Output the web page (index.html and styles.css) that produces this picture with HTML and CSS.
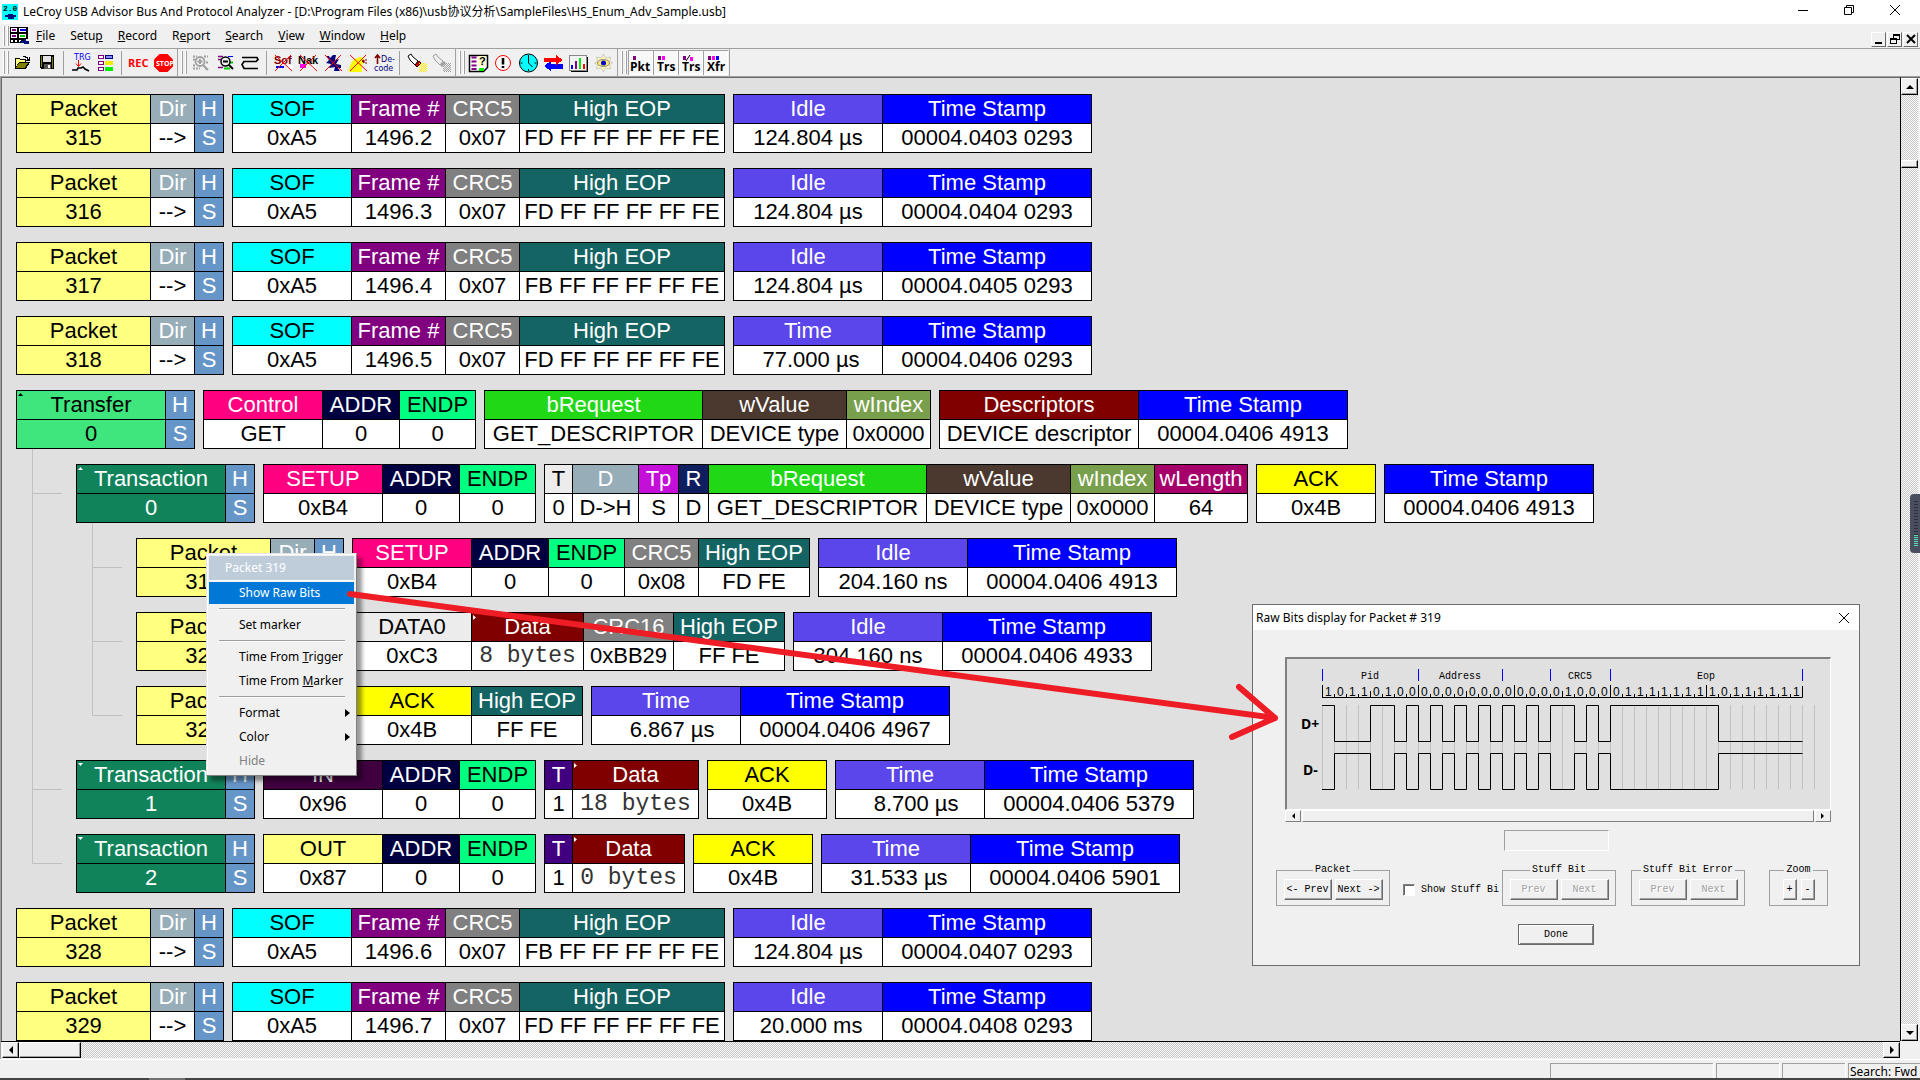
FILE: index.html
```html
<!DOCTYPE html>
<html lang="en">
<head>
<meta charset="utf-8">
<title>LeCroy USB Advisor Bus And Protocol Analyzer</title>
<link rel="stylesheet" href="styles.css">
</head>
<body>
<header class="titlebar">
  <svg class="app-icon" viewBox="0 0 16 16" shape-rendering="crispEdges"><rect width="16" height="16" fill="#0ff"/><text x="1" y="7" class="i-mono" font-size="8" fill="#000">2.0</text><path d="M3 11h3v-1h5v1h3v2h-2v2H6v-2H3z" fill="#00107c"/></svg>
  <h1>LeCroy USB Advisor Bus And Protocol Analyzer - [D:\Program Files (x86)\usb协议分析\SampleFiles\HS_Enum_Adv_Sample.usb]</h1>
  <div class="win-buttons">
    <button aria-label="Minimize"><svg viewBox="0 0 12 12"><path d="M1 6.500h10" stroke="#000" fill="none"/></svg></button>
    <button aria-label="Restore"><svg viewBox="0 0 12 12"><path d="M1.500 3.500h7v7h-7zM3.500 3V1.500h7v7H9" stroke="#000" fill="none"/></svg></button>
    <button aria-label="Close"><svg viewBox="0 0 12 12"><path d="M1 1l10 10M11 1L1 11" stroke="#000" fill="none"/></svg></button>
  </div>
</header>

<nav class="menubar">
  <span class="grip"></span>
  <svg class="doc-icon" viewBox="0 0 19 18" shape-rendering="crispEdges"><path d="M0 0h18v12h-4v4H0z" fill="#000"/><path d="M1 1h6v4H1zM9 1h7v4H9zM1 7h6v4H1zM9 7h7v4H9zM1 13h10v2H1z" fill="#fff"/><path d="M2 2h4v2H2zM2 8h4v2H2z" fill="#800080"/><path d="M10 2h6v2h-6z" fill="#00f"/><path d="M10 8h5v2h-5z" fill="#0c0"/><path d="M3 13h2v2H3zM7 13h2v2H7z" fill="#000"/><path d="M10 14h4v-2h2v2h3v3h-5v-1h-4z" fill="#00107c"/></svg>
  <button><u>F</u>ile</button><button>Setu<u>p</u></button><button><u>R</u>ecord</button><button>R<u>e</u>port</button><button><u>S</u>earch</button><button><u>V</u>iew</button><button><u>W</u>indow</button><button><u>H</u>elp</button>
  <div class="mdi-buttons">
    <button aria-label="Minimize document"><svg viewBox="0 0 12 12"><path d="M2 9h7v2H2z"/></svg></button>
    <button aria-label="Restore document"><svg viewBox="0 0 12 12" shape-rendering="crispEdges"><path d="M4 1h7v6H8v4H1V5h3zM5 3v2h3v1h2V3zM2 7v3h5V7z" fill-rule="evenodd"/></svg></button>
    <button aria-label="Close document"><svg viewBox="0 0 12 12"><path d="M2 2l8 8M10 2l-8 8" stroke="#000" stroke-width="2"/></svg></button>
  </div>
</nav>

<div class="toolbar" role="toolbar" aria-label="Tools">
  <div class="tool-group">
    <span class="grip"></span>
    <button aria-label="Open"><svg viewBox="0 0 25 25" shape-rendering="crispEdges"><path d="M5 8h4l1 1h6v3h4l-4 7H5z" fill="#000"/><path d="M6 9h3l1 1h5v2H9l-3 5z" fill="#ffff80"/><path d="M9 13h9l-3 5H6z" fill="#808000"/><path d="M13 6h3v1h2v2h1v-2h1v4h-4v-1h1V8h-2V7h-2z" fill="#000"/></svg></button>
    <button aria-label="Save"><svg viewBox="0 0 25 25" shape-rendering="crispEdges"><path d="M5 5h14v14H6l-1-1z" fill="#000"/><path d="M6 6h1v11H6zM17 7h1v11h-1z" fill="#808000"/><path d="M8 6h8v6H8z" fill="#e4e4e4"/><path d="M9 14h7v5H9z" fill="#555"/><path d="M13 15h2v3h-2z" fill="#fff"/></svg></button>
    <span class="sep"></span>
    <button aria-label="Trigger"><svg viewBox="0 0 25 25"><text x="6" y="10" class="i-sans" font-size="8" fill="#00f">TRG</text><path d="M10.500 10v6M8 13.500l2.500 3 2.500-3" stroke="#f00" fill="none"/><path d="M4 20h5l1-2h3l2-1 2 2 4 2" stroke="#000" stroke-width="1.600" fill="none"/></svg></button>
    <button aria-label="Layout"><svg viewBox="0 0 25 25" shape-rendering="crispEdges"><path d="M5.500 5.500h5v3h-5zM5.500 11.500h5v3h-5zM5.500 17.500h5v3h-5z" fill="#fff" stroke="#800080"/><path d="M12.500 5.500h7v3h-7z" fill="#88f" stroke="#000080"/><path d="M12 11h8v4h-8z" fill="#ee0"/><path d="M12 17h8v4h-8z" fill="#0e0"/></svg></button>
    <span class="sep"></span>
    <button aria-label="Record"><svg viewBox="0 0 25 25"><text x="2" y="17" class="i-cond" font-size="11" fill="#f00">REC</text></svg></button>
    <button aria-label="Stop"><svg viewBox="0 0 25 25"><path d="M8.500 4h8l5.500 5.500v7L16.500 22h-8L3 16.500v-7z" fill="#f00"/><text x="5" y="16" class="i-cond" font-size="7" fill="#fff">STOP</text></svg></button>
  </div>
  <div class="tool-group">
    <span class="grip"></span>
    <button aria-label="Zoom in" disabled><svg viewBox="0 0 25 25" fill="none" stroke="#a0a0a0"><path d="M5 6.500h4M16 6.500h4M5 9.500h3M5 15.500h3M5 18.500h7M17 18.500h3M18 12.500h3" stroke-dasharray="2 1" stroke-width="2"/><circle cx="12" cy="11.500" r="4.500" stroke-width="1.800"/><path d="M12 9v5M9.500 11.500h5M15 15l5 5" stroke-width="2"/></svg></button>
    <button aria-label="Zoom out"><svg viewBox="0 0 25 25" fill="none" stroke="#000"><path d="M5 6.500h5M5 9.500h3M5 17.500h5" stroke="#800080" stroke-width="1.600"/><path d="M15 6.500h5" stroke="#00f"/><path d="M11 18.500h6M17 12.500h3" stroke="#0c0" stroke-width="2"/><circle cx="12.500" cy="11.500" r="4.500" stroke-width="1.500" fill="#eee"/><path d="M10 11.500h5M16 15l4 4" stroke-width="1.800"/></svg></button>
    <button aria-label="Wrap"><svg viewBox="0 0 25 25"><path d="M4 7.500h15l1 2-2 2H6l-2 3 2 4h14" fill="none" stroke="#000" stroke-width="1.700"/></svg></button>
    <span class="sep"></span>
    <button aria-label="Hide SOF"><svg viewBox="0 0 25 25"><path d="M5 16h8v2H5z" fill="#00f"/><path d="M16 15h6v4h-6z" fill="#fff"/><text x="3" y="14" class="i-bold" font-size="11" fill="#800000">Sof</text><path d="M4 5l17 16M20 5L4 21" stroke="#f00"/></svg></button>
    <button aria-label="Hide NAK"><svg viewBox="0 0 25 25"><path d="M4 14h6v4H4z" fill="#f0f"/><path d="M14 15h6v4h-6z" fill="#fff"/><text x="2" y="14" class="i-bold" font-size="11" fill="#000">Nak</text><path d="M4 5l17 16M20 5L4 21" stroke="#f00"/></svg></button>
    <button aria-label="Hide devices"><svg viewBox="0 0 25 25"><path d="M5 6h3l1 2 3-3h3l-1 5 4-1-3 5 5 1v3h-3l2 3h-6l1-4-6 1 2-4-5-1 3-3z" fill="#000080"/><path d="M4 5l17 16M20 5L4 21" stroke="#f00"/></svg></button>
    <button aria-label="Hide chirps"><svg viewBox="0 0 25 25"><path d="M3 22c0-8 5-14 9-14 2-2 6-1 6 3-1 3-3 4-2 11z" fill="#ff0"/><path d="M16 11l2-1v3zM19 10h2M19 13h2" stroke="#800000" fill="#800000"/><path d="M4 5l17 16M20 5L4 21" stroke="#f00"/></svg></button>
    <button aria-label="Decode"><svg viewBox="0 0 25 25"><path d="M6.500 5v9M4 8l2.500-3L9 8" stroke="#800000" stroke-width="1.600" fill="none"/><text x="10" y="12" class="i-sans" font-size="8" fill="#000080">De-</text><text x="3" y="21" class="i-sans" font-size="8" fill="#000080">code</text></svg></button>
    <span class="sep"></span>
    <button aria-label="Find"><svg viewBox="0 0 25 25"><path d="M4 6l3-2 2 3 5 4-3 4-5-5z" fill="#fff" stroke="#000"/><path d="M11 15l4-4 2 2-4 4z" fill="#c00" stroke="#400"/><path d="M15 13h8v9h-8z" fill="url(#ydots)"/><defs><pattern id="ydots" width="2" height="2" patternUnits="userSpaceOnUse"><path d="M0 0h1v1H0zM1 1h1v1H1z" fill="#fe0"/></pattern></defs></svg></button>
    <button aria-label="Find next" disabled><svg viewBox="0 0 25 25"><path d="M4 6l3-2 2 3 5 4-3 4-5-5z" fill="#eee" stroke="#a0a0a0"/><path d="M11 15l4-4 2 2-4 4z" fill="#a0a0a0"/><path d="M14 13h8v9h-8z" fill="url(#gdots)"/><defs><pattern id="gdots" width="2" height="2" patternUnits="userSpaceOnUse"><path d="M0 0h1v1H0zM1 1h1v1H1z" fill="#a0a0a0"/></pattern></defs></svg></button>
  </div>
  <div class="tool-group">
    <span class="grip"></span>
    <button aria-label="File information"><svg viewBox="0 0 25 25"><path d="M3.500 5.500h18v12l-4 4h-14z" fill="#fff" stroke="#000" stroke-width="1.500"/><path d="M5.500 7.500h5M5.500 11.500h5M5.500 15.500h5M5.500 19h5" stroke="#800080" stroke-width="2"/><path d="M13 18h5v3h-5z" fill="#0e0"/><path d="M12 6h8v10h-8z" fill="#ffc"/><text x="13" y="15" class="i-bold" font-size="11">?</text></svg></button>
    <button aria-label="Error summary"><svg viewBox="0 0 25 25"><circle cx="12" cy="13" r="7.500" fill="#fff" stroke="#f00"/><path d="M12 8v6.500M12 16v2" stroke="#000" stroke-width="2.600"/></svg></button>
    <button aria-label="Timing"><svg viewBox="0 0 25 25"><circle cx="12.500" cy="13" r="9" fill="#0ff" stroke="#000"/><path d="M12.500 5v8l4 4M12.500 19v2M4.500 13h2M18.500 13h2" stroke="#000" fill="none"/></svg></button>
    <button aria-label="Traffic"><svg viewBox="0 0 25 25" shape-rendering="crispEdges"><path d="M22 14H10v-3l-7 5 7 5v-2h12z" fill="#00f"/><path d="M3 8h12V5l7 5-7 5v-3H3z" fill="#f00"/></svg></button>
    <button aria-label="Chart"><svg viewBox="0 0 25 25" shape-rendering="crispEdges"><path d="M5 7h17v15H5z" fill="#000"/><path d="M3 5h17v15H3z" fill="#f4f4f4" stroke="#888"/><path d="M5 15h2v4H5z" fill="#00f"/><path d="M9 11h2v8H9z" fill="#808"/><path d="M13 8h2v11h-2z" fill="#0e0"/><path d="M17 14h2v5h-2z" fill="#f00"/></svg></button>
    <button aria-label="View options"><svg viewBox="0 0 25 25"><path d="M12.500 4l2 4 5-1-1 4 3 2-3 2 1 4-5-1-2 4-2-4-5 1 1-4-3-2 3-2-1-4 5 1z" fill="#fff6b8" stroke="#bbb" stroke-width=".7"/><ellipse cx="12.500" cy="13" rx="6" ry="3.500" fill="#ffe96b" stroke="#888"/><circle cx="12.500" cy="13" r="2.500" fill="#00c"/></svg></button>
  </div>
  <div class="tool-group">
    <span class="grip"></span>
    <button class="pressed" aria-label="Packet view"><svg viewBox="0 0 25 25"><path d="M5 6h3v4H5z" fill="#800080"/><text x="2" y="21" class="i-cond" font-size="12">Pkt</text></svg></button>
    <button class="pressed" aria-label="Transaction view"><svg viewBox="0 0 25 25"><path d="M5 6h3v4H5z" fill="#800080"/><path d="M9 6h3v4H9z" fill="#f0f"/><text x="4" y="21" class="i-cond" font-size="12">Trs</text></svg></button>
    <button class="pressed" aria-label="Split transaction view"><svg viewBox="0 0 25 25"><path d="M5 6h3v4H5z" fill="#800080"/><path d="M12 7h3v4h-3z" fill="#f0f"/><path d="M8 11l4-6" stroke="#000"/><text x="4" y="21" class="i-cond" font-size="12">Trs</text></svg></button>
    <button class="pressed" aria-label="Transfer view"><svg viewBox="0 0 25 25"><path d="M5 6h3v4H5z" fill="#800080"/><path d="M9 6h3v4H9z" fill="#f0f"/><path d="M13 6h3v4h-3z" fill="#00f"/><text x="4" y="21" class="i-cond" font-size="12">Xfr</text></svg></button>
  </div>
</div>

<div class="workspace">
  <main class="trace">
    <section class="row">
      <table><tr><th class="packet">Packet</th><th class="dir">Dir</th><th class="hs">H</th></tr><tr><td class="packet">315</td><td>--&gt;</td><td class="hs">S</td></tr></table>
      <table><tr><th class="pid sof">SOF</th><th class="frame">Frame #</th><th class="crc5">CRC5</th><th class="eop long">High EOP</th></tr><tr><td>0xA5</td><td>1496.2</td><td>0x07</td><td>FD FF FF FF FF FE</td></tr></table>
      <table><tr><th class="time">Idle</th><th class="stamp">Time Stamp</th></tr><tr><td>124.804 µs</td><td>00004.0403 0293</td></tr></table>
    </section>
    <section class="row">
      <table><tr><th class="packet">Packet</th><th class="dir">Dir</th><th class="hs">H</th></tr><tr><td class="packet">316</td><td>--&gt;</td><td class="hs">S</td></tr></table>
      <table><tr><th class="pid sof">SOF</th><th class="frame">Frame #</th><th class="crc5">CRC5</th><th class="eop long">High EOP</th></tr><tr><td>0xA5</td><td>1496.3</td><td>0x07</td><td>FD FF FF FF FF FE</td></tr></table>
      <table><tr><th class="time">Idle</th><th class="stamp">Time Stamp</th></tr><tr><td>124.804 µs</td><td>00004.0404 0293</td></tr></table>
    </section>
    <section class="row">
      <table><tr><th class="packet">Packet</th><th class="dir">Dir</th><th class="hs">H</th></tr><tr><td class="packet">317</td><td>--&gt;</td><td class="hs">S</td></tr></table>
      <table><tr><th class="pid sof">SOF</th><th class="frame">Frame #</th><th class="crc5">CRC5</th><th class="eop long">High EOP</th></tr><tr><td>0xA5</td><td>1496.4</td><td>0x07</td><td>FB FF FF FF FF FE</td></tr></table>
      <table><tr><th class="time">Idle</th><th class="stamp">Time Stamp</th></tr><tr><td>124.804 µs</td><td>00004.0405 0293</td></tr></table>
    </section>
    <section class="row">
      <table><tr><th class="packet">Packet</th><th class="dir">Dir</th><th class="hs">H</th></tr><tr><td class="packet">318</td><td>--&gt;</td><td class="hs">S</td></tr></table>
      <table><tr><th class="pid sof">SOF</th><th class="frame">Frame #</th><th class="crc5">CRC5</th><th class="eop long">High EOP</th></tr><tr><td>0xA5</td><td>1496.5</td><td>0x07</td><td>FD FF FF FF FF FE</td></tr></table>
      <table><tr><th class="time">Time</th><th class="stamp">Time Stamp</th></tr><tr><td>&nbsp;77.000 µs</td><td>00004.0406 0293</td></tr></table>
    </section>

    <section class="transfer-block">
      <div class="row">
        <table><tr><th class="transfer mark-up">Transfer</th><th class="hs">H</th></tr><tr><td class="transfer">0</td><td class="hs">S</td></tr></table>
        <table><tr><th class="pid setup">Control</th><th class="addr">ADDR</th><th class="endp">ENDP</th></tr><tr><td>GET</td><td>0</td><td>0</td></tr></table>
        <table><tr><th class="request">bRequest</th><th class="value">wValue</th><th class="index">wIndex</th></tr><tr><td>GET_DESCRIPTOR</td><td>DEVICE type</td><td>0x0000</td></tr></table>
        <table><tr><th class="descriptors">Descriptors</th><th class="stamp">Time Stamp</th></tr><tr><td>DEVICE descriptor</td><td>00004.0406 4913</td></tr></table>
      </div>
      <div class="children">
        <div class="node">
          <div class="row">
            <table><tr><th class="transaction mark-up">Transaction</th><th class="hs">H</th></tr><tr><td class="transaction">0</td><td class="hs">S</td></tr></table>
            <table><tr><th class="pid setup">SETUP</th><th class="addr">ADDR</th><th class="endp">ENDP</th></tr><tr><td>0xB4</td><td>0</td><td>0</td></tr></table>
            <table><tr><th class="toggle pale">T</th><th class="direction">D</th><th class="type">Tp</th><th class="recipient">R</th><th class="request">bRequest</th><th class="value">wValue</th><th class="index">wIndex</th><th class="length">wLength</th></tr><tr><td>0</td><td>D-&gt;H</td><td>S</td><td>D</td><td>GET_DESCRIPTOR</td><td>DEVICE type</td><td>0x0000</td><td>64</td></tr></table>
            <table><tr><th class="pid ack">ACK</th></tr><tr><td>0x4B</td></tr></table>
            <table><tr><th class="stamp">Time Stamp</th></tr><tr><td>00004.0406 4913</td></tr></table>
          </div>
          <div class="children">
            <div class="node">
              <div class="row">
                <table><tr><th class="packet">Packet</th><th class="dir">Dir</th><th class="hs">H</th></tr><tr><td class="packet">319</td><td>--&gt;</td><td class="hs">S</td></tr></table>
                <table><tr><th class="pid setup">SETUP</th><th class="addr">ADDR</th><th class="endp">ENDP</th><th class="crc5">CRC5</th><th class="eop">High EOP</th></tr><tr><td>0xB4</td><td>0</td><td>0</td><td>0x08</td><td>FD FE</td></tr></table>
                <table><tr><th class="time">Idle</th><th class="stamp">Time Stamp</th></tr><tr><td>204.160 ns</td><td>00004.0406 4913</td></tr></table>
              </div>
            </div>
            <div class="node">
              <div class="row">
                <table><tr><th class="packet">Packet</th><th class="dir">Dir</th><th class="hs">H</th></tr><tr><td class="packet">320</td><td>--&gt;</td><td class="hs">S</td></tr></table>
                <table><tr><th class="pid pale">DATA0</th><th class="data mark-right">Data</th><th class="crc16">CRC16</th><th class="eop">High EOP</th></tr><tr><td>0xC3</td><td class="bytes">8 bytes</td><td>0xBB29</td><td>FF FE</td></tr></table>
                <table><tr><th class="time">Idle</th><th class="stamp">Time Stamp</th></tr><tr><td>304.160 ns</td><td>00004.0406 4933</td></tr></table>
              </div>
            </div>
            <div class="node last">
              <div class="row">
                <table><tr><th class="packet">Packet</th><th class="dir">Dir</th><th class="hs">H</th></tr><tr><td class="packet">321</td><td>--&gt;</td><td class="hs">S</td></tr></table>
                <table><tr><th class="pid ack">ACK</th><th class="eop">High EOP</th></tr><tr><td>0x4B</td><td>FF FE</td></tr></table>
                <table><tr><th class="time">Time</th><th class="stamp">Time Stamp</th></tr><tr><td>&nbsp;&nbsp;6.867 µs</td><td>00004.0406 4967</td></tr></table>
              </div>
            </div>
          </div>
        </div>
        <div class="node">
          <div class="row">
            <table><tr><th class="transaction mark-down">Transaction</th><th class="hs">H</th></tr><tr><td class="transaction">1</td><td class="hs">S</td></tr></table>
            <table><tr><th class="pid in">IN</th><th class="addr">ADDR</th><th class="endp">ENDP</th></tr><tr><td>0x96</td><td>0</td><td>0</td></tr></table>
            <table><tr><th class="toggle">T</th><th class="data wide mark-right">Data</th></tr><tr><td>1</td><td class="bytes">18 bytes</td></tr></table>
            <table><tr><th class="pid ack">ACK</th></tr><tr><td>0x4B</td></tr></table>
            <table><tr><th class="time">Time</th><th class="stamp">Time Stamp</th></tr><tr><td>&nbsp;&nbsp;8.700 µs</td><td>00004.0406 5379</td></tr></table>
          </div>
        </div>
        <div class="node last">
          <div class="row">
            <table><tr><th class="transaction mark-down">Transaction</th><th class="hs">H</th></tr><tr><td class="transaction">2</td><td class="hs">S</td></tr></table>
            <table><tr><th class="pid out">OUT</th><th class="addr">ADDR</th><th class="endp">ENDP</th></tr><tr><td>0x87</td><td>0</td><td>0</td></tr></table>
            <table><tr><th class="toggle">T</th><th class="data mark-right">Data</th></tr><tr><td>1</td><td class="bytes">0 bytes</td></tr></table>
            <table><tr><th class="pid ack">ACK</th></tr><tr><td>0x4B</td></tr></table>
            <table><tr><th class="time">Time</th><th class="stamp">Time Stamp</th></tr><tr><td>&nbsp;31.533 µs</td><td>00004.0406 5901</td></tr></table>
          </div>
        </div>
      </div>
    </section>

    <section class="row">
      <table><tr><th class="packet">Packet</th><th class="dir">Dir</th><th class="hs">H</th></tr><tr><td class="packet">328</td><td>--&gt;</td><td class="hs">S</td></tr></table>
      <table><tr><th class="pid sof">SOF</th><th class="frame">Frame #</th><th class="crc5">CRC5</th><th class="eop long">High EOP</th></tr><tr><td>0xA5</td><td>1496.6</td><td>0x07</td><td>FB FF FF FF FF FE</td></tr></table>
      <table><tr><th class="time">Idle</th><th class="stamp">Time Stamp</th></tr><tr><td>124.804 µs</td><td>00004.0407 0293</td></tr></table>
    </section>
    <section class="row">
      <table><tr><th class="packet">Packet</th><th class="dir">Dir</th><th class="hs">H</th></tr><tr><td class="packet">329</td><td>--&gt;</td><td class="hs">S</td></tr></table>
      <table><tr><th class="pid sof">SOF</th><th class="frame">Frame #</th><th class="crc5">CRC5</th><th class="eop long">High EOP</th></tr><tr><td>0xA5</td><td>1496.7</td><td>0x07</td><td>FD FF FF FF FF FE</td></tr></table>
      <table><tr><th class="time">Idle</th><th class="stamp">Time Stamp</th></tr><tr><td>&nbsp;20.000 ms</td><td>00004.0408 0293</td></tr></table>
    </section>
  </main>
  <div class="vscroll">
    <button aria-label="Scroll up"><svg viewBox="0 0 8 8"><path d="M0 6l4-4 4 4z"/></svg></button>
    <span class="track before"></span><span class="thumb"></span><span class="track"></span>
    <button aria-label="Scroll down"><svg viewBox="0 0 8 8"><path d="M0 2l4 4 4-4z"/></svg></button>
  </div>
  <div class="hscroll">
    <button aria-label="Scroll left"><svg viewBox="0 0 8 8"><path d="M6 0L2 4l4 4z"/></svg></button>
    <span class="thumb"></span><span class="track"></span>
    <button aria-label="Scroll right"><svg viewBox="0 0 8 8"><path d="M2 0l4 4-4 4z"/></svg></button>
  </div>
</div>

<footer class="statusbar">
  <span class="pane wide"></span><span class="pane"></span><span class="pane"></span><span class="pane search">Search: Fwd</span>
</footer>
<div class="desktop-edge"><span></span></div>

<div class="context-menu" role="menu">
  <div class="menu-title">Packet 319</div>
  <button role="menuitem" class="selected">Show Raw Bits</button>
  <hr>
  <button role="menuitem">Set marker</button>
  <hr>
  <button role="menuitem"><span>Time From <u>T</u>rigger</span></button>
  <button role="menuitem"><span>Time From <u>M</u>arker</span></button>
  <hr>
  <button role="menuitem">Format<svg viewBox="0 0 5 8"><path d="M0 0l5 4-5 4z"/></svg></button>
  <button role="menuitem">Color<svg viewBox="0 0 5 8"><path d="M0 0l5 4-5 4z"/></svg></button>
  <button role="menuitem" disabled>Hide</button>
</div>

<div class="dialog" role="dialog" aria-label="Raw Bits">
  <div class="dialog-title"><h2>Raw Bits display for Packet # 319</h2><button aria-label="Close dialog"><svg viewBox="0 0 12 12"><path d="M1 1l10 10M11 1L1 11" stroke="#000" fill="none"/></svg></button></div>
  <div class="dialog-body">
    <svg class="wave" viewBox="0 0 543 150">
      <defs>
        <pattern id="bits" x="35" y="0" width="12" height="150" patternUnits="userSpaceOnUse"><path d="M.5 0v150" stroke="#c0c0c0"/></pattern>
        <pattern id="ticks" x="35" y="0" width="12" height="40" patternUnits="userSpaceOnUse"><path d="M.5 35v4" stroke="#000"/></pattern>
      </defs>
      <rect x="35" y="46" width="493" height="84" fill="url(#bits)"/>
      <rect x="35" y="34" width="480" height="5" fill="url(#ticks)"/>
      <path d="M35.500 10v12M131.500 10v12M215.500 10v12M263.500 10v12M323.500 10v12M515.500 10v12" stroke="#00f"/>
      <g class="labels"><text x="83" y="20">Pid</text><text x="173" y="20">Address</text><text x="293" y="20">CRC5</text><text x="419" y="20">Eop</text></g>
      <path d="M35.500 26v12.500h480V27M131.500 26v12M227.500 26v12M323.500 26v12M419.500 26v12M83.500 32v6M179.500 32v6M275.500 32v6M371.500 32v6M467.500 32v6" stroke="#000" fill="none"/>
      <g class="bits"><text x="38 50 62 74 86 98 110 122" y="37">10110100</text><text x="134 146 158 170 182 194 206 218" y="37">00000000</text><text x="230 242 254 266 278 290 302 314" y="37">00001000</text><text x="326 338 350 362 374 386 398 410" y="37">01111111</text><text x="422 434 446 458 470 482 494 506" y="37">10111111</text></g>
      <g fill="none" stroke="#000">
        <path d="M35 46.500h12.500v36h36v-36h24v36h12v-36h12v36h12v-36h12v36h12v-36h12v36h12v-36h12v36h12v-36h12v36h12v-36h12v36h12v-36h24v36h12v-36h12v36h12v-36h108v36h84"/>
        <path d="M35 130.500h12.500v-36h36v36h24v-36h12v36h12v-36h12v36h12v-36h12v36h12v-36h12v36h12v-36h12v36h12v-36h12v36h12v-36h12v36h24v-36h12v36h12v-36h12v36h108v-36h84"/>
      </g>
      <text class="line-name" x="14" y="70">D+</text><text class="line-name" x="16" y="116">D-</text>
    </svg>
    <div class="wave-scroll">
      <button aria-label="Wave left"><svg viewBox="0 0 6 6"><path d="M5 0L2 3l3 3z"/></svg></button><span></span><button aria-label="Wave right"><svg viewBox="0 0 6 6"><path d="M1 0l3 3-3 3z"/></svg></button>
    </div>
    <input class="readout" aria-label="Selected bits" readonly>
    <div class="controls">
      <fieldset><legend>Packet</legend><button>&lt;- Prev</button><button>Next -&gt;</button></fieldset>
      <label class="stuff"><input type="checkbox">Show Stuff Bi</label>
      <fieldset><legend>Stuff Bit</legend><button disabled>Prev</button><button disabled>Next</button></fieldset>
      <fieldset class="errors"><legend>Stuff Bit Error</legend><button disabled>Prev</button><button disabled>Next</button></fieldset>
      <fieldset class="zoom"><legend>Zoom</legend><button>+</button><button>-</button></fieldset>
    </div>
    <button class="done">Done</button>
  </div>
</div>

<svg class="callout" viewBox="0 0 940 160"><path d="M9 9L934 133M898 102l36 31-43 19" fill="none" stroke="#ee1c24" stroke-width="6" stroke-linecap="round" stroke-linejoin="round"/></svg>
<div class="side-meter"><span class="idle"></span><span class="live"></span></div>
</body>
</html>
```
FILE: styles.css
```css
* { box-sizing: border-box; }

body {
  margin: 0;
  min-height: 100vh;
  display: flex;
  flex-direction: column;
  position: relative;
  overflow: hidden;
  background: #f0f0f0;
  color: #000;
  font: 12px/16px "Noto Sans", "Noto Sans CJK SC", sans-serif;
}

button {
  font: inherit;
  color: inherit;
  padding: 0;
  margin: 0;
  border: 0;
  background: none;
}

svg { display: block; }

/* Title bar */
.titlebar {
  height: 24px;
  padding: 0 2px;
  display: flex;
  align-items: center;
  background: #fff;
}
.app-icon { width: 16px; height: 16px; }
.titlebar h1 {
  margin: 0 0 0 5px;
  flex: 1;
  font: inherit;
  line-height: 24px;
  white-space: nowrap;
}
.win-buttons { display: flex; align-self: flex-start; }
.win-buttons button { width: 46px; height: 20px; display: grid; place-items: center; }
.win-buttons svg { width: 12px; height: 12px; }

/* Menu bar */
.menubar {
  height: 25px;
  display: flex;
  align-items: center;
  border-bottom: 1px solid #a0a0a0;
}
.menubar > button { padding: 0 8px 0 7px; line-height: 22px; }
.grip {
  width: 10px;
  align-self: stretch;
  margin: 2px 0;
  background:
    linear-gradient(#a0a0a0, #a0a0a0) 4px 0 / 1px 100% no-repeat,
    linear-gradient(#a0a0a0, #a0a0a0) 8px 0 / 1px 100% no-repeat,
    linear-gradient(#fff, #fff) 3px 0 / 1px 100% no-repeat,
    linear-gradient(#fff, #fff) 7px 0 / 1px 100% no-repeat;
}
.doc-icon { width: 19px; height: 18px; }
.mdi-buttons { margin-left: auto; padding: 6px 2px 0 0; display: flex; gap: 1px; }
.mdi-buttons button {
  width: 15px;
  height: 15px;
  display: grid;
  place-items: center;
  border: 1px solid;
  border-color: #fff #696969 #696969 #fff;
}
.mdi-buttons svg { width: 12px; height: 12px; }

/* Tool bar */
.toolbar { height: 28px; display: flex; border-bottom: 1px solid #a0a0a0; }
.tool-group {
  display: flex;
  align-items: center;
  padding-right: 1px;
  border-right: 1px solid #a0a0a0;
}
.tool-group button, .tool-group button svg { width: 25px; height: 25px; }
.tool-group .pressed {
  background: #f8f8f8;
  box-shadow: inset 1px 1px #a0a0a0, inset -1px -1px #fff;
}
.sep { width: 8px; height: 24px; border-left: 3px solid transparent; }
.sep::before { content: ""; display: block; width: 1px; height: 24px; background: #a0a0a0; }
.i-mono { font-family: "Liberation Mono", monospace; font-weight: bold; }
.i-sans { font-family: "DejaVu Sans", sans-serif; }
.i-bold { font-family: "Liberation Sans", sans-serif; font-weight: bold; }
.i-cond { font-family: "Liberation Sans Narrow", "Open Sans", sans-serif; font-weight: bold; }

/* Document window */
.workspace {
  flex: 1;
  min-height: 0;
  display: grid;
  grid-template: minmax(0, 1fr) 18px / minmax(0, 1fr) 20px;
  border: solid #a0a0a0;
  border-width: 0 0 0 1px;
}
.trace {
  padding: 16px 0 0 14px;
  background: #e0e0e0;
  border: solid #696969;
  border-width: 1px 0 0 1px;
  font: 22px/28px "Liberation Sans", Arial, sans-serif;
  display: flex;
  flex-direction: column;
  gap: 15px;
  overflow: hidden;
}
.row { display: flex; gap: 8px; }
.row table {
  border-collapse: separate;
  border-spacing: 0;
  border: solid #000;
  border-width: 1px 0 0 1px;
  flex: none;
}
.row th, .row td {
  height: 29px;
  padding: 0;
  border: solid #000;
  border-width: 0 1px 1px 0;
  background: #fff;
  font-weight: normal;
  text-align: center;
  white-space: nowrap;
}
.row th { color: #fff; position: relative; }
.row .bytes { font: 23px/28px "Liberation Mono", monospace; color: #333; }

.row .packet { background: #ffff80; color: #000; width: 134px; }
.row .dir { background: #97adb8; width: 44px; }
.row .hs { background: #6696c8; color: #fff; width: 29px; }
.row .pid { width: 119px; }
.row .sof { background: #0ff; color: #000; }
.row .setup { background: #ff0080; }
.row .in { background: #400040; }
.row .out { background: #ffff80; color: #000; }
.row .ack { background: #ff0; color: #000; }
.row .frame { background: #800080; width: 94px; }
.row .crc5 { background: #808080; width: 74px; }
.row .crc16 { background: #808080; width: 90px; }
.row .eop { background: #156464; width: 111px; }
.row .eop.long { width: 205px; }
.row .time { background: #5a46eb; width: 149px; }
.row .stamp { background: #00f; width: 209px; }
.row .transfer { background: #3ee67d; color: #000; width: 149px; }
.row .transaction { background: #11835b; color: #fff; width: 149px; }
.row .addr { background: #000040; width: 77px; }
.row .endp { background: #00ff80; color: #000; width: 76px; }
.row .request { background: #20d816; width: 218px; }
.row .value { background: #4b382f; width: 144px; }
.row .index { background: #789f4c; width: 84px; }
.row .length { background: #a6006b; width: 93px; }
.row .descriptors { background: #800000; width: 199px; }
.row .toggle { background: #400080; width: 28px; }
.row .direction { background: #97adb8; width: 66px; }
.row .type { background: #c30fd7; width: 40px; }
.row .recipient { background: #0f1e5f; width: 30px; }
.row .data { background: #800000; width: 112px; }
.row .data.wide { width: 126px; }
.row .pale { background: #ececec; color: #000; }

.mark-up::before, .mark-down::before, .mark-right::before {
  content: "";
  position: absolute;
  left: 1px;
  top: 2px;
  width: 5px;
  height: 3px;
  background: currentColor;
}
.mark-up::before { clip-path: polygon(50% 0, 100% 100%, 0 100%); }
.mark-down::before { clip-path: polygon(0 0, 100% 0, 50% 100%); }
.mark-right::before { width: 3px; height: 5px; clip-path: polygon(0 0, 100% 50%, 0 100%); }

/* Tree guides: a stem down the left and a tick to each child */
.children { margin-left: 16px; }
.node {
  padding: 15px 0 0 44px;
  background:
    linear-gradient(#c0c0c0, #c0c0c0) 0 44px / 30px 1px no-repeat,
    linear-gradient(#c0c0c0, #c0c0c0) 0 0 / 1px 100% no-repeat;
}
.node.last {
  background:
    linear-gradient(#c0c0c0, #c0c0c0) 0 44px / 30px 1px no-repeat,
    linear-gradient(#c0c0c0, #c0c0c0) 0 0 / 1px 44px no-repeat;
}

/* Scroll bars */
.track {
  flex: 1;
  background: repeating-conic-gradient(#f8f8f8 0 25%, #c8c8c8 0 50%) 0 0 / 2px 2px;
}
.vscroll {
  display: flex;
  flex-direction: column;
  border: solid #000;
  border-width: 1px 0 0 1px;
  border-top-color: #696969;
  padding-right: 2px;
}
.hscroll { display: flex; border-top: 1px solid #000; padding: 0 0 1px 1px; }
.vscroll button, .hscroll button {
  flex: none;
  width: 17px;
  height: 17px;
  display: grid;
  place-items: center;
  background: #f0f0f0;
  border: 1px solid;
  border-color: #fff #000 #000 #fff;
  box-shadow: inset -1px -1px #a0a0a0;
}
.hscroll button { height: 16px; }
.vscroll svg, .hscroll svg { width: 8px; height: 8px; }
.vscroll .before { flex: 0 0 65px; }
.thumb {
  flex: none;
  background: #f0f0f0;
  border: 1px solid;
  border-color: #fff #000 #000 #fff;
  box-shadow: inset -1px -1px #a0a0a0;
}
.vscroll .thumb { height: 8px; }
.hscroll .thumb { width: 62px; }

/* Status bar */
.statusbar {
  height: 19px;
  padding-top: 3px;
  border-top: 1px solid #fff;
  display: flex;
  justify-content: flex-end;
  gap: 3px;
}
.pane {
  width: 63px;
  border: solid #a0a0a0;
  border-width: 1px 0 0 1px;
  box-shadow: 1px 0 #fff;
  white-space: nowrap;
}
.pane.wide { width: 163px; }
.pane.search { width: 72px; padding-left: 1px; }
.desktop-edge { height: 2px; background: #444; padding-left: 149px; }
.desktop-edge span { display: block; width: 36px; height: 2px; background: #707070; }

/* Context menu */
.context-menu {
  position: absolute;
  left: 206px;
  top: 553px;
  width: 151px;
  padding: 2px;
  display: flex;
  flex-direction: column;
  background: #f0f0f0;
  border: 1px solid;
  border-color: #e4e4e4 #808080 #808080 #e4e4e4;
  box-shadow: inset 1px 1px #fff, 5px 5px 4px rgb(0 0 0 / 40%);
}
.menu-title {
  margin-bottom: 1px;
  padding-left: 16px;
  background: #bfcddb;
  color: #fff;
  line-height: 24px;
  border-bottom: 1px solid #fff;
}
.context-menu button {
  height: 24px;
  padding: 0 4px 0 30px;
  display: flex;
  align-items: center;
  justify-content: space-between;
  white-space: nowrap;
}
.context-menu .selected { height: 22px; margin-bottom: 1px; background: #0078d7; color: #fff; }
.context-menu button:disabled { color: #808080; }
.context-menu svg { width: 5px; height: 8px; }
.context-menu hr {
  width: 126px;
  margin: 3px 10px;
  border: 0;
  border-top: 1px solid #a0a0a0;
  border-bottom: 1px solid #fff;
}

/* Raw bits dialog */
.dialog {
  position: absolute;
  left: 1252px;
  top: 604px;
  width: 608px;
  background: #f0f0f0;
  border: 1px solid #6c6c6c;
  font: 10px/12px "Liberation Mono", monospace;
}
.dialog-title {
  height: 25px;
  padding: 0 9px 0 3px;
  display: flex;
  align-items: center;
  justify-content: space-between;
  background: #fff;
}
.dialog-title h2 { margin: 0; font: 12px/24px "Noto Sans", sans-serif; }
.dialog-title svg { width: 12px; height: 12px; }
.dialog-body { padding: 27px 23px 20px; display: flex; flex-direction: column; }
.wave {
  width: 546px;
  height: 153px;
  margin-left: 9px;
  background: #e0e0e0;
  border: solid;
  border-width: 2px 1px 1px 2px;
  border-color: #808080 #fff #fff #808080;
}
.labels { text-anchor: middle; font-size: 10px; }
.bits { font: 12px "Liberation Sans", sans-serif; }
.line-name { font: bold 14px "Noto Sans", sans-serif; }
.wave-scroll { display: flex; gap: 1px; height: 12px; width: 546px; margin-left: 9px; }
.wave-scroll button, .wave-scroll span {
  border: 1px solid;
  border-color: #fff #808080 #808080 #fff;
}
.wave-scroll button { width: 16px; display: grid; place-items: center; }
.wave-scroll span { flex: 1; }
.wave-scroll svg { width: 6px; height: 6px; }
.readout {
  align-self: center;
  width: 105px;
  height: 21px;
  margin: 8px 0 13px;
  background: none;
  border: 1px solid;
  border-color: #a0a0a0 #fff #fff #a0a0a0;
}
.controls { display: flex; align-items: flex-end; }
.controls fieldset {
  width: 114px;
  height: 42px;
  margin: 0;
  padding: 3px 0 0;
  display: flex;
  justify-content: center;
  gap: 3px;
  border: 1px solid #a0a0a0;
}
.controls .errors { margin-left: 15px; }
.controls .zoom { width: 59px; margin-left: 24px; gap: 4px; }
.controls legend { margin: 0 auto; padding: 0 2px; }
.controls button {
  width: 48px;
  height: 21px;
  white-space: nowrap;
  border: 1px solid;
  border-color: #fff #696969 #696969 #fff;
  box-shadow: inset -1px -1px #a0a0a0;
}
.controls .zoom button { width: 14px; }
.controls button:disabled { color: #a0a0a0; text-shadow: 1px 1px #fff; }
.stuff {
  display: flex;
  align-items: center;
  gap: 6px;
  width: 99px;
  height: 32px;
  margin-left: 13px;
  white-space: nowrap;
}
.stuff input {
  appearance: none;
  flex: none;
  width: 12px;
  height: 12px;
  margin: 0;
  background: #fff;
  border: 1px solid;
  border-color: #808080 #fff #fff #808080;
  box-shadow: inset 1px 1px #696969;
}
.done {
  align-self: center;
  width: 76px;
  height: 21px;
  margin-top: 18px;
  border: 1px solid #696969;
  box-shadow: inset 1px 1px #fff, inset -1px -1px #808080;
}

/* Hand-drawn callout from the menu item to the dialog */
.callout {
  position: absolute;
  left: 341px;
  top: 585px;
  width: 940px;
  height: 160px;
  overflow: visible;
  pointer-events: none;
}

/* Floating meter at the screen edge */
.side-meter {
  position: absolute;
  right: 0;
  top: 494px;
  width: 10px;
  padding: 7px 2px 6px 4px;
  background: #4a4f60;
  border-radius: 4px 0 0 4px;
}
.side-meter span { display: block; }
.side-meter .idle { height: 34px; background: repeating-linear-gradient(#2c303c 0 1px, transparent 1px 3px); }
.side-meter .live { height: 12px; background: repeating-linear-gradient(#5fd9b0 0 1px, transparent 1px 2px); }
```
